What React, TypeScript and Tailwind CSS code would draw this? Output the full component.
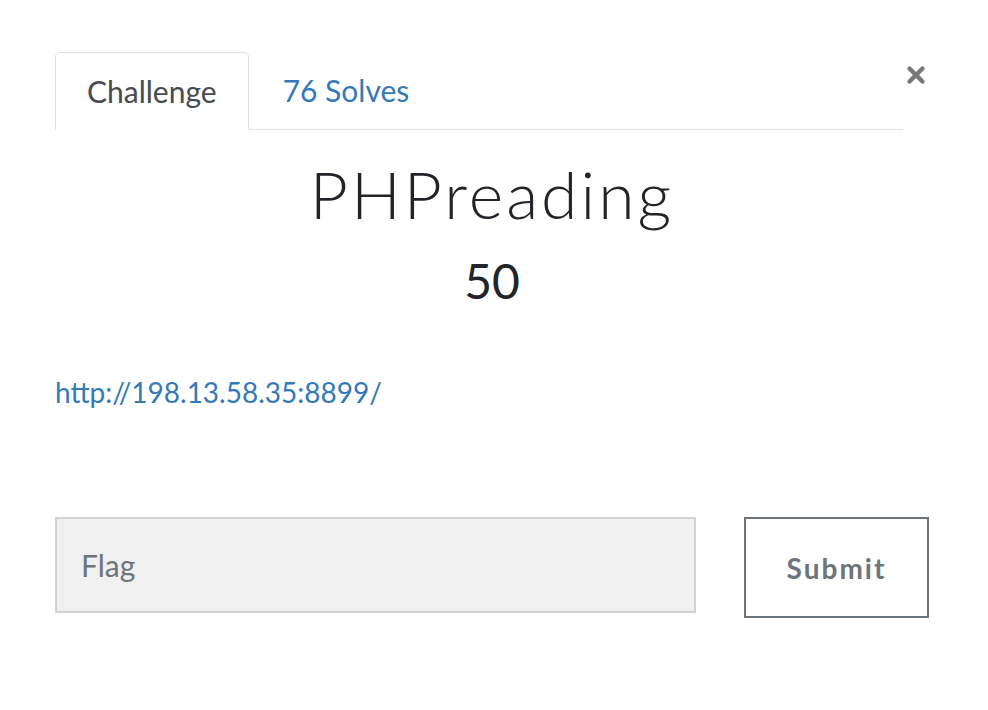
import { X } from 'lucide-react';

export default function App() {
  return (
    <div className="min-h-[710px] w-[988px] bg-white font-['Lato','Noto_Sans',sans-serif]">
      <div className="pl-[55px] pr-[59px] pt-[52px]">
        {/* header: tabs + close */}
        <div className="flex items-start">
          <div className="flex flex-1 border-b border-[#dee2e6]">
            <div className="-mb-px rounded-t-[5px] border border-b-white border-[#dee2e6] bg-white px-[31px] py-[19px] text-[30px] leading-[38px] text-[#464c52]">
              Challenge
            </div>
            <div className="px-[34px] py-[19px] text-[30px] leading-[38px] text-[#337ab7]">
              76 Solves
            </div>
          </div>
          <button className="mt-[8px] flex h-[30px] w-[26px] items-center justify-center text-[#777]">
            <X size={32} strokeWidth={4} />
          </button>
        </div>

        {/* title */}
        <div className="mt-[24px] flex flex-col items-center text-[#212529]">
          <h1 className="text-[66px] font-light leading-[80px] tracking-[3px]">
            PHPreading
          </h1>
          <div className="mt-[21px] text-[48px] leading-[52px]">50</div>
        </div>

        {/* link */}
        <div className="mt-[68px]">
          <a href="#" className="text-[28px] leading-[34px] text-[#337ab7]">
            http://198.13.58.35:8899/
          </a>
        </div>

        {/* form */}
        <form className="mt-[108px] flex items-start justify-between">
          <input
            placeholder="Flag"
            className="h-[96px] w-[641px] border-2 border-[#cfd3d8] bg-[#f0f0f0] px-[24px] text-[30px] text-[#495057] outline-none placeholder:text-[#6c757d]"
          />
          <button
            type="button"
            className="h-[101px] w-[185px] border-2 border-[#6c757d] bg-white text-[28px] font-bold tracking-[2px] text-[#6c757d]"
          >
            Submit
          </button>
        </form>
      </div>
    </div>
  );
}
